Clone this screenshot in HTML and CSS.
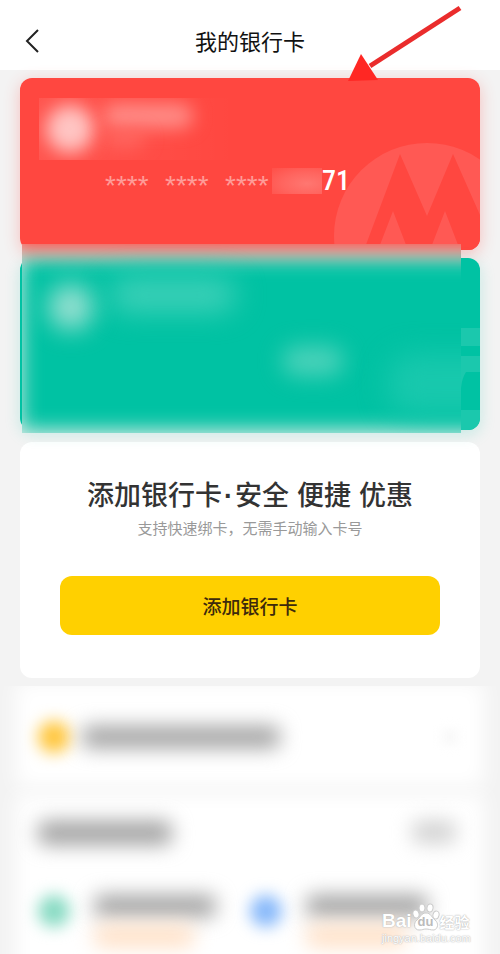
FILE: index.html
```html
<!DOCTYPE html>
<html lang="zh-CN">
<head>
<meta charset="utf-8">
<meta name="viewport" content="width=device-width, initial-scale=1">
<title>我的银行卡</title>
<link rel="stylesheet" href="styles.css">
</head>
<body>
<header class="topbar">
  <button class="back" type="button" aria-label="返回">
    <svg width="14" height="24" viewBox="0 0 14 24"><path d="M13 1 2 12l11 11" fill="none" stroke="#222" stroke-width="2"/></svg>
  </button>
  <h1>我的银行卡</h1>
</header>
<svg class="pointer" width="114" height="78" viewBox="0 0 114 78" aria-hidden="true">
  <path d="M112 4 22 62" stroke="#ea2c2c" stroke-width="5"/>
  <path d="M0 77 13 50 30 76Z" fill="#ff2723"/>
</svg>

<main>
  <section class="cards">
    <article class="card card-red">
      <svg class="emblem" width="147" height="108" viewBox="0 0 147 108" aria-hidden="true">
        <circle cx="94" cy="94" r="93" fill="#ff5954"/>
        <path d="M31 108 67 12 94 74 120 12 147 73V108H127L112 69 97 108H75L60 69 45 108Z" fill="#ff4740"/>
      </svg>
      <div class="smudge">
        <i class="blob avatar"></i><i class="blob bank"></i><i class="blob kind"></i>
      </div>
      <p class="number"><span>****</span><span>****</span><span>****</span><i class="hidden-digits"></i><b>71</b></p>
    </article>
    <article class="card card-green">
      <svg class="stripes" width="19" height="172" viewBox="0 0 19 172" aria-hidden="true">
        <path d="M0 70H19V88H0ZM0 98H19V114H5Q1 120 0 130ZM0 152H19V172H0Z" fill="#1bc8ad"/>
      </svg>
      <div class="frost">
        <i class="frost-green"></i><i class="frost-red"></i>
        <i class="blob avatar"></i><i class="blob bank"></i><i class="blob digits"></i><i class="blob mark"></i>
      </div>
    </article>
  </section>

  <section class="add">
    <h2><span>添加银行卡<span class="dot">·</span>安全</span> <span>便捷</span> <span>优惠</span></h2>
    <p>支持快速绑卡，无需手动输入卡号</p>
    <button type="button">添加银行卡</button>
  </section>
</main>

<section class="veil" aria-hidden="true">
  <div class="sheet sheet-row">
    <i class="disc gold"></i><i class="line line-long"></i><i class="tick"></i>
  </div>
  <div class="sheet sheet-list">
    <div class="row"><i class="line line-title"></i><i class="line line-more"></i></div>
    <div class="offers">
      <div class="offer"><i class="disc mint"></i><div><i class="line line-name"></i><i class="line line-note"></i></div></div>
      <div class="offer"><i class="disc blue"></i><div><i class="line line-name"></i><i class="line line-note"></i></div></div>
    </div>
  </div>
</section>

<div class="watermark">
  <div class="brand">
    <span class="latin">Bai</span>
    <span class="paw">
      <svg width="28" height="28" viewBox="0 0 28 28">
        <g fill="#fff" stroke="#ccc" stroke-width="1">
          <ellipse cx="4" cy="11" rx="3" ry="4" transform="rotate(-15 4 11)"/>
          <ellipse cx="10" cy="5" rx="3" ry="4"/>
          <ellipse cx="18" cy="5" rx="3" ry="4" transform="rotate(10 18 5)"/>
          <ellipse cx="24" cy="12" rx="3" ry="4" transform="rotate(15 24 12)"/>
          <path d="M14 10C9 10 9 14 5 17C1 20 2 27 7 27C11 27 11 26 14 26S18 27 22 27C26 26 27 20 23 17C19 14 19 10 14 10Z"/>
        </g>
      </svg>
      <span class="du">du</span>
    </span>
    <span class="han">经验</span>
  </div>
  <div class="url">jingyan.baidu.com</div>
</div>
</body>
</html>
```
FILE: styles.css
```css
* { box-sizing: border-box; }
body {
  position: relative;
  margin: 0;
  background: #f3f3f3;
  color: #333;
  font-family: "Noto Sans CJK SC", sans-serif;
  overflow-x: hidden;
}
h1, h2, p { margin: 0; font-weight: 400; }
i { display: block; }
button { border: 0; padding: 0; font-family: inherit; }

.topbar {
  display: grid;
  grid-template-columns: 64px 1fr 64px;
  align-items: center;
  height: 70px;
  padding-top: 12px;
  background: #fff;
}
.back { display: flex; align-items: center; height: 48px; padding-left: 25px; background: none; }
h1 { padding-bottom: 3px; font-size: 22px; line-height: 32px; text-align: center; color: #111; }
.pointer { position: absolute; top: 4px; right: 38px; z-index: 3; }

main { padding: 8px 20px; }
.cards { display: grid; gap: 8px; }
.card { position: relative; height: 172px; border-radius: 12px; }
.card-red { background: #ff4740; box-shadow: 0 4px 16px rgba(255, 71, 64, .3); }
.card-green { background: #00c2a3; box-shadow: 0 4px 16px rgba(0, 194, 163, .2); }
.emblem { position: absolute; right: 0; bottom: 0; border-radius: 0 0 12px 0; }
.stripes { position: absolute; right: 0; top: 0; border-radius: 0 12px 12px 0; }

.blob { position: absolute; border-radius: 24px; filter: blur(9px); }
.smudge {
  position: absolute;
  inset: 20px 180px 90px 19px;
  overflow: hidden;
  background: linear-gradient(90deg, rgba(255, 255, 255, .08), transparent 75%);
}
.smudge .avatar { left: 7px; top: 7px; width: 48px; height: 48px; background: #ffc5c3; }
.smudge .bank { left: 64px; top: 6px; width: 90px; height: 24px; background: #ff8e89; }
.smudge .kind { left: 66px; top: 34px; width: 40px; height: 14px; background: #ff6a64; }

.number {
  display: flex;
  align-items: center;
  position: absolute;
  left: 85px;
  top: 88px;
  height: 30px;
  color: #fff;
}
.number span {
  width: 60px;
  padding-top: 10px;
  font: 28px/30px "Liberation Sans", sans-serif;
  color: #ff9c98;
}
.number b { font: 500 28px/30px "Roboto Condensed", Roboto, sans-serif; }
.hidden-digits {
  width: 50px;
  height: 26px;
  margin-left: -13px;
  background: radial-gradient(ellipse at 70% 60%, #ff7771, #ff655f 50%, #ff4f48);
}

.frost { position: absolute; inset: -14px 19px -3px 2px; overflow: hidden; background: #dcebe7; z-index: 1; }
.frost-green { position: absolute; inset: 14px -40px 3px -1px; background: #00c2a3; filter: blur(10px); }
.frost-red { position: absolute; inset: -40px -40px auto -10px; height: 46px; background: #ff4740; filter: blur(10px); }
.frost .avatar { left: 26px; top: 40px; width: 46px; height: 46px; background: #94dfd0; filter: blur(12px); }
.frost .bank { left: 88px; top: 34px; width: 126px; height: 34px; background: #3dd0b8; filter: blur(14px); }
.frost .digits { left: 260px; top: 102px; width: 62px; height: 30px; background: #4bd2ba; filter: blur(11px); }
.frost .mark { left: 366px; top: 110px; width: 130px; height: 60px; background: #18c8ad; filter: blur(14px); }

.add {
  margin-top: 12px;
  padding: 32px 40px 43px;
  border-radius: 12px;
  background: #fff;
  text-align: center;
}
.add h2 {
  display: flex;
  justify-content: center;
  gap: 8px;
  font-size: 27px;
  line-height: 40px;
  font-weight: 500;
  white-space: nowrap;
}
.dot { margin: 0 2px; font-family: "Liberation Sans", sans-serif; font-weight: 700; line-height: 1; }
.add p { font-size: 15px; line-height: 28px; color: #999; }
.add button {
  display: block;
  width: 100%;
  height: 59px;
  margin-top: 34px;
  border-radius: 12px;
  background: #ffd000;
  color: #3d2a0c;
  font-size: 19px;
  font-weight: 500;
}

.veil { height: 268px; overflow: hidden; }
.sheet { position: relative; margin: 0 20px; }
.sheet::before { content: ""; position: absolute; inset: -4px -4px 0; background: #fff; filter: blur(10px); }
.sheet-row { display: flex; align-items: center; height: 101px; padding: 0 18px; }
.sheet-list { height: 180px; margin-top: 11px; padding: 23px 18px 0; }
.disc { position: relative; width: 32px; height: 32px; border-radius: 50%; filter: blur(8px); }
.gold { background: #ffc63c; }
.mint { background: #86dac2; }
.blue { background: #86b8fa; }
.line { position: relative; height: 22px; border-radius: 8px; background: #a2a2a2; filter: blur(10px); }
.line-long { width: 198px; margin-left: 12px; }
.line-title { width: 134px; height: 24px; }
.line-more { width: 44px; background: #d0d0d0; }
.tick { position: relative; width: 12px; height: 12px; margin: 0 6px 0 auto; background: #f4f4f4; filter: blur(6px); }
.row { display: flex; justify-content: space-between; padding-right: 6px; }
.offers { display: grid; grid-template-columns: 1fr 1fr; padding-top: 50px; }
.offer { display: grid; grid-template-columns: 32px 1fr; gap: 24px; }
.line-name { width: 122px; }
.line-note { width: 100px; margin-top: 8px; background: #ffe0c6; }

.watermark { position: absolute; right: 28px; bottom: 9px; width: 90px; color: #fff; text-shadow: 0 0 1px #aaa, 0 0 2px #ccc; }
.brand { display: flex; align-items: flex-end; height: 30px; }
.latin { font: 700 19px/20px "Liberation Sans", sans-serif; }
.paw { position: relative; width: 28px; height: 28px; }
.du { position: absolute; left: 6px; bottom: 2px; font: 700 13px/14px "Liberation Sans", sans-serif; color: #bbb; text-shadow: none; }
.han { font-size: 15px; line-height: 18px; font-weight: 700; }
.url { font: 11px/14px "Liberation Sans", sans-serif; }
```
